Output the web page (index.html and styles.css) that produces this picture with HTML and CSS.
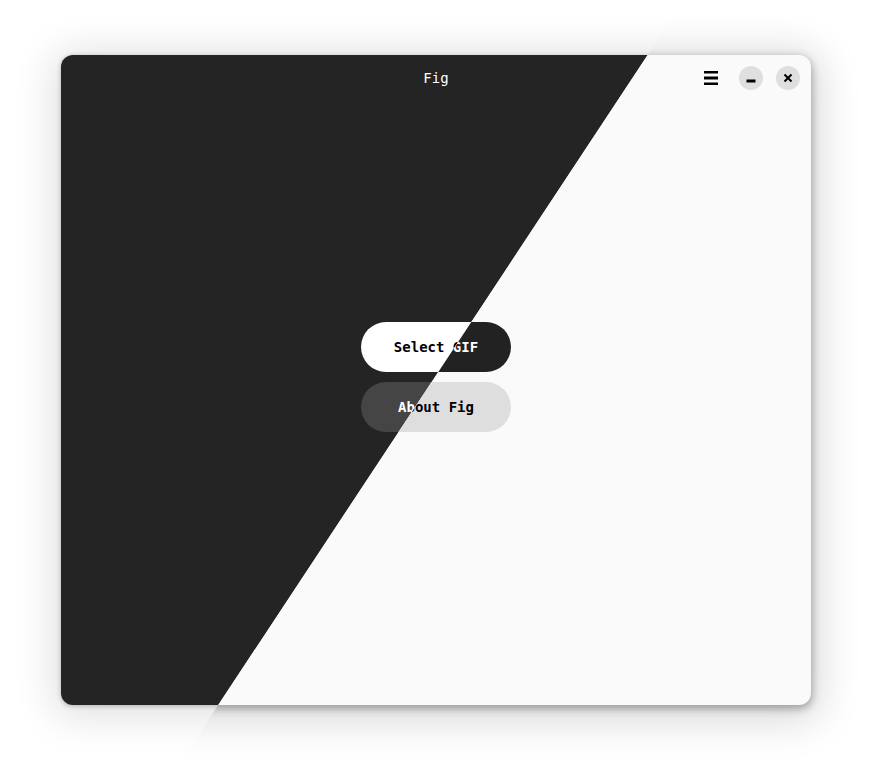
FILE: index.html
```html
<!DOCTYPE html>
<html>
<head>
<meta charset="utf-8">
<link rel="stylesheet" href="styles.css">
</head>
<body>
<div class="stage">
  <div class="layer dark">
    <div class="window">
      <div class="header">
        <div class="spacer"></div>
        <div class="title">Fig</div>
        <div class="controls">
          <span class="menu"><svg width="14" height="14" viewBox="0 0 14 14"><rect x="0" y="0" width="14" height="2"/><rect x="0" y="6" width="14" height="2"/><rect x="0" y="12" width="14" height="2"/></svg></span>
          <span class="wbtn"><svg width="10" height="10" viewBox="0 0 10 10"><rect x="1" y="7" width="8" height="2"/></svg></span>
          <span class="wbtn"><svg width="10" height="10" viewBox="0 0 10 10"><path d="M1.5 1.5 L8.5 8.5 M8.5 1.5 L1.5 8.5" stroke-width="2" fill="none"/></svg></span>
        </div>
      </div>
      <div class="content">
        <button class="btn primary">Select GIF</button>
        <button class="btn secondary">About Fig</button>
      </div>
    </div>
  </div>
  <div class="layer light">
    <div class="window">
      <div class="header">
        <div class="spacer"></div>
        <div class="title">Fig</div>
        <div class="controls">
          <span class="menu"><svg width="14" height="14" viewBox="0 0 14 14"><rect x="0" y="0" width="14" height="2"/><rect x="0" y="6" width="14" height="2"/><rect x="0" y="12" width="14" height="2"/></svg></span>
          <span class="wbtn"><svg width="10" height="10" viewBox="0 0 10 10"><rect x="1" y="7" width="8" height="2"/></svg></span>
          <span class="wbtn"><svg width="10" height="10" viewBox="0 0 10 10"><path d="M1.5 1.5 L8.5 8.5 M8.5 1.5 L1.5 8.5" stroke-width="2" fill="none"/></svg></span>
        </div>
      </div>
      <div class="content">
        <button class="btn primary">Select GIF</button>
        <button class="btn secondary">About Fig</button>
      </div>
    </div>
  </div>
</div>
</body>
</html>
```
FILE: styles.css
```css
html, body {
  margin: 0;
  padding: 0;
  background: #ffffff;
}
.stage {
  width: 872px;
  height: 772px;
  display: grid;
  overflow: hidden;
}
.layer {
  grid-area: 1 / 1;
  padding: 55px 61px 67px 61px;
  background: #ffffff;
}
.layer.light {
  clip-path: polygon(684px 0, 872px 0, 872px 772px, 174px 772px);
}
.window {
  width: 750px;
  height: 650px;
  border-radius: 12px;
  display: flex;
  flex-direction: column;
  font-family: "DejaVu Sans Mono", "Liberation Mono", monospace;
}
.dark .window {
  background: #242424;
  color: #ffffff;
  box-shadow: 0 4px 40px 8px rgba(0,0,0,0.12), 0 1px 5px rgba(0,0,0,0.25);
}
.light .window {
  background: #fafafa;
  color: #000000;
  box-shadow: 0 6px 40px 10px rgba(0,0,0,0.15), 0 3px 8px 1px rgba(0,0,0,0.3);
}
.header {
  height: 46px;
  display: grid;
  grid-template-columns: 1fr auto 1fr;
  align-items: center;
}
.title {
  font-size: 14px;
  line-height: 46px;
}
.controls {
  justify-self: end;
  display: flex;
  align-items: center;
  padding-right: 11px;
}
.menu {
  width: 34px;
  height: 34px;
  display: flex;
  align-items: center;
  justify-content: center;
  margin-right: 11px;
}
.wbtn {
  width: 24px;
  height: 24px;
  border-radius: 50%;
  display: flex;
  align-items: center;
  justify-content: center;
  margin-left: 13px;
}
.menu + .wbtn { margin-left: 0; }
.dark svg { fill: #ffffff; stroke: #ffffff; }
.light svg { fill: #000000; stroke: #000000; }
.dark .wbtn { background: #3a3a3a; }
.light .wbtn { background: #dfdfdf; }
.content {
  flex: 1;
  display: flex;
  flex-direction: column;
  align-items: center;
  justify-content: center;
  gap: 10px;
  padding-bottom: 52px;
}
.btn {
  width: 150px;
  height: 50px;
  border-radius: 25px;
  border: none;
  font-family: "DejaVu Sans Mono", "Liberation Mono", monospace;
  font-weight: bold;
  font-size: 14px;
  padding: 0;
}
.dark .primary { background: #ffffff; color: #000000; }
.light .primary { background: #222222; color: #ffffff; }
.dark .secondary { background: #454545; color: #ffffff; }
.light .secondary { background: #dedede; color: #000000; }
```
